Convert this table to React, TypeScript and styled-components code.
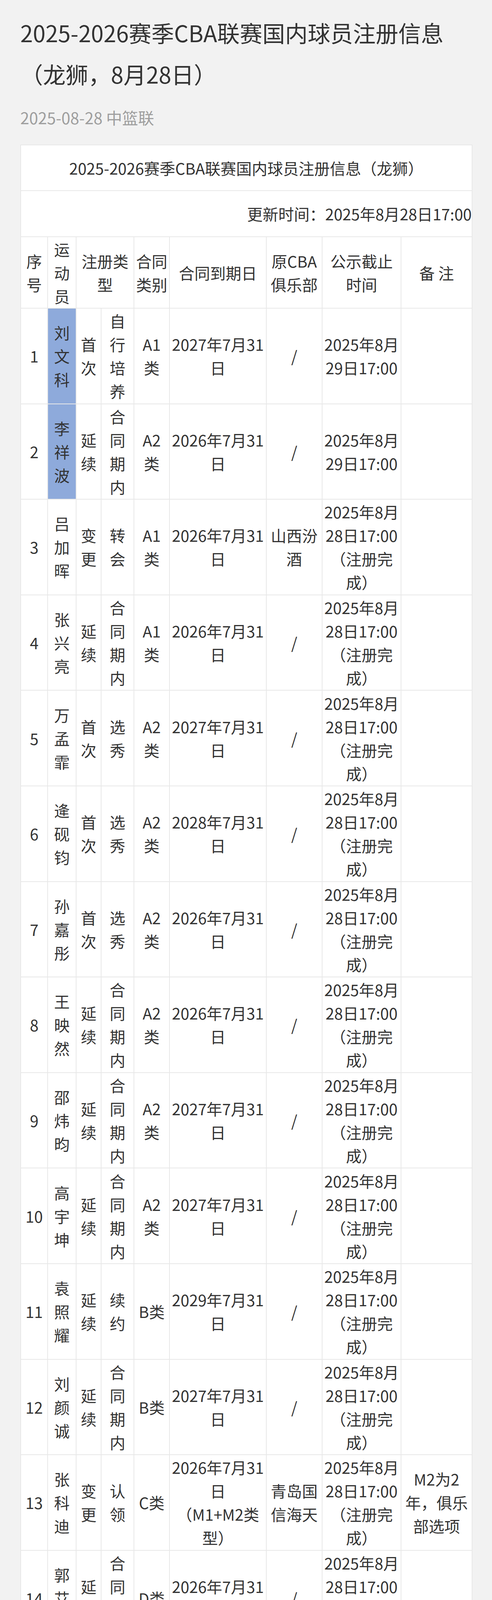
import React from "react";
import styled, { createGlobalStyle } from "styled-components";

const Global = createGlobalStyle`
  html, body {
    margin: 0;
    padding: 0;
    background: #f2f2f2;
  }
  body {
    font-family: "Noto Sans CJK SC", "Noto Sans", sans-serif;
    color: #333333;
  }
`;

const Page = styled.div`
  padding: 30px 52px 0 52px;
  background: #f2f2f2;
`;

const Title = styled.h1`
  margin: 0;
  font-size: 58px;
  line-height: 106px;
  font-weight: 400;
  color: #333333;
`;

const Meta = styled.div`
  margin-top: 28px;
  font-size: 41px;
  line-height: 60px;
  color: #9e9e9e;
`;

const Table = styled.table`
  margin-top: 40px;
  width: 1156px;
  table-layout: fixed;
  border-collapse: collapse;
  background: #ffffff;
  font-size: 40px;
  line-height: 60px;
  color: #333333;
`;

const Cell = styled.td<{ $h: number; $blue?: boolean; $align?: "center" | "right" }>`
  border: 2px solid #e8e8e8;
  padding: 0;
  height: ${(p) => p.$h}px;
  text-align: ${(p) => p.$align ?? "center"};
  vertical-align: middle;
  background: ${(p) => (p.$blue ? "#8eaadb" : "#ffffff")};
  overflow: visible;
`;

const Line = styled.span`
  display: block;
  white-space: nowrap;
`;

type Row = {
  no: string;
  name: string;
  hl?: boolean;
  t1: string;
  t2: string;
  cls: string[];
  exp: string[];
  club: string[];
  pub: string[];
  note: string[];
};

const done = ["2025年8月", "28日17:00", "（注册完", "成）"];
const day = (y: string) => [`${y}年7月31`, "日"];

const rows: Row[] = [
  { no: "1", name: "刘文科", hl: true, t1: "首次", t2: "自行培养", cls: ["A1", "类"], exp: day("2027"), club: ["/"], pub: ["2025年8月", "29日17:00"], note: [] },
  { no: "2", name: "李祥波", hl: true, t1: "延续", t2: "合同期内", cls: ["A2", "类"], exp: day("2026"), club: ["/"], pub: ["2025年8月", "29日17:00"], note: [] },
  { no: "3", name: "吕加晖", t1: "变更", t2: "转会", cls: ["A1", "类"], exp: day("2026"), club: ["山西汾", "酒"], pub: done, note: [] },
  { no: "4", name: "张兴亮", t1: "延续", t2: "合同期内", cls: ["A1", "类"], exp: day("2026"), club: ["/"], pub: done, note: [] },
  { no: "5", name: "万孟霏", t1: "首次", t2: "选秀", cls: ["A2", "类"], exp: day("2027"), club: ["/"], pub: done, note: [] },
  { no: "6", name: "逄砚钧", t1: "首次", t2: "选秀", cls: ["A2", "类"], exp: day("2028"), club: ["/"], pub: done, note: [] },
  { no: "7", name: "孙嘉彤", t1: "首次", t2: "选秀", cls: ["A2", "类"], exp: day("2026"), club: ["/"], pub: done, note: [] },
  { no: "8", name: "王映然", t1: "延续", t2: "合同期内", cls: ["A2", "类"], exp: day("2026"), club: ["/"], pub: done, note: [] },
  { no: "9", name: "邵炜昀", t1: "延续", t2: "合同期内", cls: ["A2", "类"], exp: day("2027"), club: ["/"], pub: done, note: [] },
  { no: "10", name: "高宇坤", t1: "延续", t2: "合同期内", cls: ["A2", "类"], exp: day("2027"), club: ["/"], pub: done, note: [] },
  { no: "11", name: "袁照耀", t1: "延续", t2: "续约", cls: ["B类"], exp: day("2029"), club: ["/"], pub: done, note: [] },
  { no: "12", name: "刘颜诚", t1: "延续", t2: "合同期内", cls: ["B类"], exp: day("2027"), club: ["/"], pub: done, note: [] },
  { no: "13", name: "张科迪", t1: "变更", t2: "认领", cls: ["C类"], exp: ["2026年7月31", "日", "（M1+M2类", "型）"], club: ["青岛国", "信海天"], pub: done, note: ["M2为2", "年，俱乐", "部选项"] },
  { no: "14", name: "郭艾伦", t1: "延续", t2: "合同期内", cls: ["D类"], exp: day("2026"), club: ["/"], pub: done, note: [] },
];

const colWidths = [69, 73, 64, 84, 91, 248, 143, 202, 182];

const Lines: React.FC<{ items: string[] }> = ({ items }) => (
  <>
    {items.map((t, i) => (
      <Line key={i}>{t}</Line>
    ))}
  </>
);

const ROW_H = 242.6;

export default function App() {
  return (
    <>
      <Global />
      <Page>
        <Title>
          2025-2026赛季CBA联赛国内球员注册信息
          <br />
          （龙狮，8月28日）
        </Title>
        <Meta>2025-08-28 中篮联</Meta>
        <Table>
          <colgroup>
            {colWidths.map((w, i) => (
              <col key={i} style={{ width: w }} />
            ))}
          </colgroup>
          <tbody>
            <tr>
              <Cell $h={115} colSpan={9}>
                <Line>2025-2026赛季CBA联赛国内球员注册信息（龙狮）</Line>
              </Cell>
            </tr>
            <tr>
              <Cell $h={116} colSpan={9} $align="right">
                <Line>更新时间：2025年8月28日17:00</Line>
              </Cell>
            </tr>
            <tr>
              <Cell $h={181}><Lines items={["序", "号"]} /></Cell>
              <Cell $h={181}><Lines items={["运", "动", "员"]} /></Cell>
              <Cell $h={181} colSpan={2}><Lines items={["注册类", "型"]} /></Cell>
              <Cell $h={181}><Lines items={["合同", "类别"]} /></Cell>
              <Cell $h={181}><Lines items={["合同到期日"]} /></Cell>
              <Cell $h={181}><Lines items={["原CBA", "俱乐部"]} /></Cell>
              <Cell $h={181}><Lines items={["公示截止", "时间"]} /></Cell>
              <Cell $h={181}><Lines items={["备 注"]} /></Cell>
            </tr>
            {rows.map((r) => (
              <tr key={r.no}>
                <Cell $h={ROW_H}><Lines items={[r.no]} /></Cell>
                <Cell $h={ROW_H} $blue={r.hl}><Lines items={r.name.split("")} /></Cell>
                <Cell $h={ROW_H}><Lines items={r.t1.split("")} /></Cell>
                <Cell $h={ROW_H}><Lines items={r.t2.split("")} /></Cell>
                <Cell $h={ROW_H}><Lines items={r.cls} /></Cell>
                <Cell $h={ROW_H}><Lines items={r.exp} /></Cell>
                <Cell $h={ROW_H}><Lines items={r.club} /></Cell>
                <Cell $h={ROW_H}><Lines items={r.pub} /></Cell>
                <Cell $h={ROW_H}><Lines items={r.note} /></Cell>
              </tr>
            ))}
          </tbody>
        </Table>
      </Page>
    </>
  );
}
